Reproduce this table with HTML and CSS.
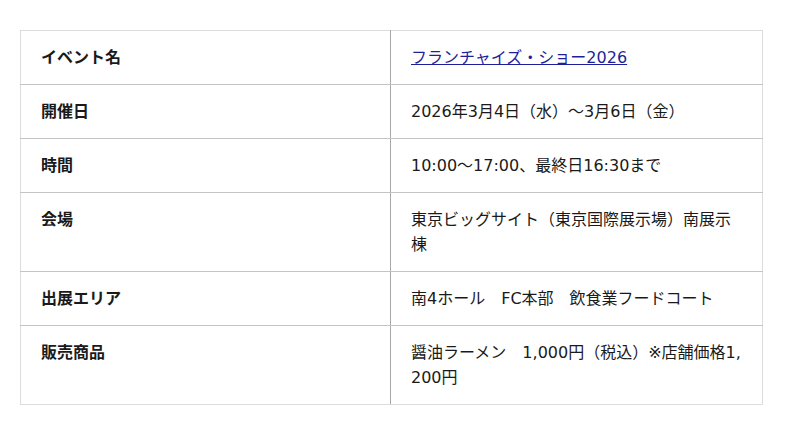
FILE: index.html
```html
<!DOCTYPE html>
<html lang="ja">
<head>
<meta charset="utf-8">
<link rel="stylesheet" href="styles.css">
</head>
<body>
<div class="wrap">
<table class="info">
<tr><th>イベント名</th><td><a href="#">フランチャイズ・ショー2026</a></td></tr>
<tr><th>開催日</th><td>2026年3月4日（水）～3月6日（金）</td></tr>
<tr><th>時間</th><td>10:00～17:00、最終日16:30まで</td></tr>
<tr><th>会場</th><td>東京ビッグサイト（東京国際展示場）南展示棟</td></tr>
<tr><th>出展エリア</th><td>南4ホール　FC本部　飲食業フードコート</td></tr>
<tr><th>販売商品</th><td>醤油ラーメン　1,000円（税込）※店舗価格1,200円</td></tr>
</table>
</div>
</body>
</html>
```
FILE: styles.css
```css
html, body { margin: 0; padding: 0; background: #fff; }
body {
  font-family: "DejaVu Sans", "Noto Sans CJK JP", sans-serif;
  font-size: 16px;
  color: #1a1a1a;
}
.wrap { padding: 30px 38px 0 20px; }
.info {
  width: 742px;
  border-collapse: collapse;
  table-layout: fixed;
  border: 1px solid #dcdcdc;
}
.info th, .info td {
  padding: 14px 20px;
  line-height: 25px;
  vertical-align: top;
  text-align: left;
  border-top: 1px solid #c4c4c4;
  border-bottom: 1px solid #c4c4c4;
  word-break: break-all;
}
.info tr:first-child th, .info tr:first-child td { border-top-color: #dcdcdc; }
.info tr:last-child th, .info tr:last-child td { border-bottom-color: #dcdcdc; }
.info th {
  width: 329px;
  font-weight: bold;
  border-right: 1px solid #a8a8a8;
}
.info td { width: 331px; }
.info a { color: #1f1f9a; text-decoration: underline; }
```
